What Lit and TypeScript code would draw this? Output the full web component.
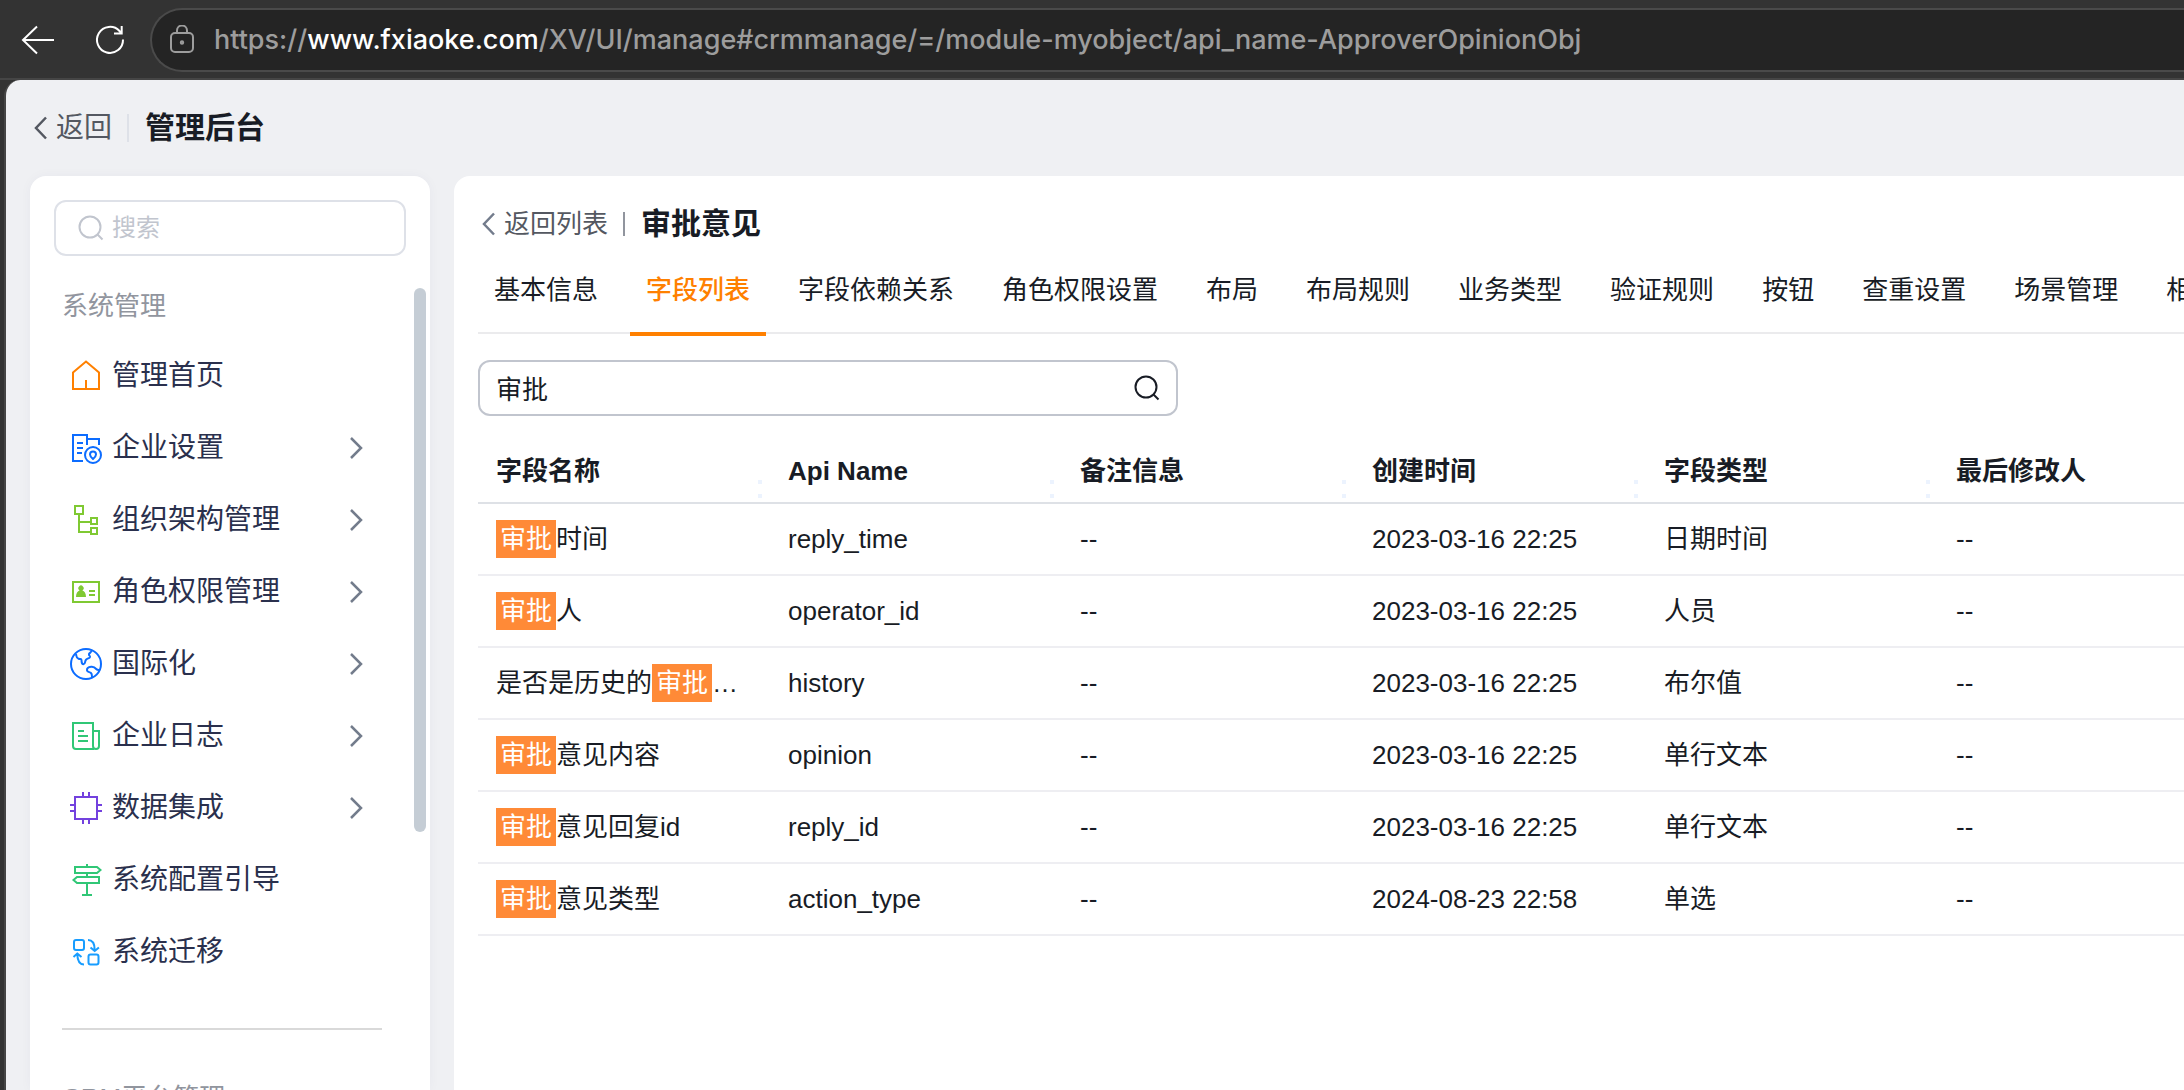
import { LitElement, html, svg, css, nothing } from "lit";
import { customElement, property, state } from "lit/decorators.js";
import { classMap } from "lit/directives/class-map.js";

const icons = {
  home: svg`<path d="M3 29V12.5L16 1.5l13 11V29Z M16 20v9"/>`,
  company: svg`<path d="M13 29H3V3h14v10 M17 7h12v6 M7 11h6M7 16h6M7 21h5"/><circle cx="23" cy="23" r="8"/><path d="M23 27c-2-1.800-3-3-3-4.600a3 3 0 0 1 6 0c0 1.600-1 2.800-3 4.600Z"/>`,
  org: svg`<path d="M5 2h8v8H5Z M9 11v17h11 M9 18h11 M21 14h6v6h-6Z M21 24h6v6h-6Z"/>`,
  role: svg`<path d="M3 6h26v20H3Z M19 15h6 M19 19h6"/><path class="solid" d="M6 21c0-4 1.600-6 3.600-6.600a2.600 2.600 0 1 1 2.800 0C14.400 15 16 17 16 21Z"/>`,
  globe: svg`<circle cx="16" cy="16" r="15"/><path d="M6 6c.5 2 0 4 2.500 4.800 2 .6 2.800-.5 3 1.200.2 2-.2 4.200 2 4.200 2.200 0 1-3 2.500-4.500 1.500-1.500 3.500-1.200 4-2.700.4-1.400-1.600-1.400-1-3 .5-1.200 2.400-1.400 2.600-3.500 M30 22c-1.600.2-2.800.2-3.800-1-1.200-1.500-2.700-2.500-5-2.200-2.600.3-4.400 1.700-4.200 3.500.2 1.900 2.400 1.600 3.800 2.600 1.400 1 1.200 2.400 1.200 4.800"/>`,
  log: svg`<path d="M24 29H6a3 3 0 0 1-3-3V3h20v23a3 3 0 0 0 3 3 3 3 0 0 0 3-3V11h-6 M8 11h6 M8 16h10 M8 21h10"/>`,
  chip: svg`<path d="M5 5h22v22H5Z M13 0v5 M19 0v5 M13 27v5 M19 27v5 M0 13h5 M0 19h5 M27 13h5 M27 19h5"/>`,
  guide: svg`<path d="M5 3h22l3.500 3L27 9H5Z M29 13H7l-3.500 3L7 19h22Z M17 0v3 M17 9v4 M17 19v12 M12 31h10"/>`,
  migrate: svg`<rect x="4" y="4" width="10" height="10" rx="2"/><rect x="18.500" y="18.500" width="10" height="10" rx="2"/><path d="M18 4c4.500 0 6.700 3 6.700 10 M20.500 11.500l4.200 3.500 4.200-3.500 M14 28.500c-4.500 0-6.500-3.500-6.700-10 M3.500 21l3.800-3.500 4.200 3.500"/>`,
};

type IconName = keyof typeof icons;

interface MenuItem {
  label: string;
  icon: IconName;
  color: string;
  expandable: boolean;
}

const MENU: MenuItem[] = [
  { label: "管理首页", icon: "home", color: "orange", expandable: false },
  { label: "企业设置", icon: "company", color: "blue", expandable: true },
  { label: "组织架构管理", icon: "org", color: "lime", expandable: true },
  { label: "角色权限管理", icon: "role", color: "lime", expandable: true },
  { label: "国际化", icon: "globe", color: "blue", expandable: true },
  { label: "企业日志", icon: "log", color: "green", expandable: true },
  { label: "数据集成", icon: "chip", color: "purple", expandable: true },
  { label: "系统配置引导", icon: "guide", color: "green", expandable: false },
  { label: "系统迁移", icon: "migrate", color: "sky", expandable: false },
];

const TABS = ["基本信息", "字段列表", "字段依赖关系", "角色权限设置", "布局", "布局规则", "业务类型", "验证规则", "按钮", "查重设置", "场景管理", "相"];

const COLUMNS = ["字段名称", "Api Name", "备注信息", "创建时间", "字段类型", "最后修改人"];

const ROWS = [
  ["审批时间", "reply_time", "--", "2023-03-16 22:25", "日期时间", "--"],
  ["审批人", "operator_id", "--", "2023-03-16 22:25", "人员", "--"],
  ["是否是历史的审批…", "history", "--", "2023-03-16 22:25", "布尔值", "--"],
  ["审批意见内容", "opinion", "--", "2023-03-16 22:25", "单行文本", "--"],
  ["审批意见回复id", "reply_id", "--", "2023-03-16 22:25", "单行文本", "--"],
  ["审批意见类型", "action_type", "--", "2024-08-23 22:58", "单选", "--"],
];

const chevronLeft = html`<svg class="chevron" viewBox="0 0 14 24" aria-hidden="true"><path d="M12 1.500L2 12l10 10.500"/></svg>`;
const magnifier = html`<svg class="magnifier" viewBox="0 0 26 26" aria-hidden="true"><circle cx="12" cy="12" r="10.500"/><path d="M19.500 19.500L24.500 24.500"/></svg>`;

const shared = css`
  * { box-sizing: border-box; }
  button, input { font: inherit; color: inherit; margin: 0; padding: 0; border: 0; background: none; }
  button { cursor: pointer; white-space: nowrap; }
  a { color: inherit; text-decoration: none; }
  h1, h2 { margin: 0; }
  svg { fill: none; stroke: currentColor; stroke-width: 2; flex: none; display: block; }
  .chevron { width: 14px; height: 24px; stroke-width: 2.500; }
  .magnifier { width: 26px; height: 26px; }
`;

@customElement("browser-bar")
export class BrowserBar extends LitElement {
  static styles = [shared, css`
    :host { display: flex; align-items: center; height: 80px; padding: 2px 0 0 20px; background: #333; color: #fff; border-bottom: 2px solid #454545; overflow: hidden; box-sizing: border-box; }
    .navs { display: flex; gap: 36px; }
    .nav svg { width: 36px; height: 32px; }
    .address { flex: 1; height: 64px; margin-left: 22px; padding-left: 16px; display: flex; align-items: center; gap: 18px; border: 2px solid #4a4a4a; border-right: 0; border-radius: 32px 0 0 32px; background: #242424; color: #9d9d9d; font: 500 27px/36px Inter, sans-serif; white-space: nowrap; min-width: 0; }
    .address svg { width: 28px; height: 30px; }
    .domain { color: #fff; }
  `];

  render() {
    return html`
      <div class="navs">
        <button class="nav" aria-label="后退"><svg viewBox="0 0 36 32"><path d="M34 16H3 M17 2.500L3 16l14 13.500"/></svg></button>
        <button class="nav" aria-label="刷新"><svg viewBox="0 0 36 32"><path d="M31 15.500A13 13 0 1 1 27.500 7L29.500 9 M29.700 2v7.500H22"/></svg></button>
      </div>
      <div class="address">
        <svg viewBox="0 0 28 30"><rect x="3" y="8" width="22" height="19" rx="4"/><path d="M9 8V5.500a5 5 0 0 1 10 0V8"/><circle cx="14" cy="17.500" r="1.200"/></svg>
        <span>https://<span class="domain">www.fxiaoke.com</span>/XV/UI/manage#crmmanage/=/module-myobject/api_name-ApproverOpinionObj</span>
      </div>
    `;
  }
}

@customElement("side-menu")
export class SideMenu extends LitElement {
  static styles = [shared, css`
    :host { display: block; position: relative; width: 400px; flex: none; padding: 24px 24px 0; background: #fff; border-radius: 16px 16px 0 0; box-shadow: 0 0 12px rgba(40, 60, 110, 0.04); overflow: hidden; box-sizing: border-box; }
    .search { display: flex; align-items: center; gap: 8px; height: 56px; padding: 0 22px; border: 2px solid #dee1e8; border-radius: 12px; color: #c1c5ce; font-size: 24px; }
    .search input { flex: 1; min-width: 0; outline: none; color: #181c25; }
    .search input::placeholder { color: #c1c5ce; opacity: 1; }
    .group { margin: 0; padding: 32px 8px 16px; font-size: 26px; line-height: 36px; font-weight: 400; color: #91959e; }
    nav { padding: 0 24px 0 16px; }
    .item { display: flex; align-items: center; gap: 10px; height: 72px; width: 100%; color: #2a304d; font-size: 28px; line-height: 40px; }
    .item span { flex: 1; }
    .icon { width: 32px; height: 32px; }
    .solid { fill: currentColor; stroke: none; }
    .arrow { width: 14px; height: 24px; margin-right: 19px; stroke-width: 2.500; color: #737c8c; }
    .orange { color: #ff8000; }
    .blue { color: #0c6cff; }
    .lime { color: #7fc932; }
    .green { color: #30c776; }
    .purple { color: #7341de; }
    .sky { color: #189dff; }
    .divider { height: 2px; margin: 40px 24px 18px 8px; border: 0; background: #d9d9d9; }
    .thumb { position: absolute; top: 112px; right: 4px; width: 12px; height: 544px; border-radius: 6px; background: #c5cdd5; }
  `];

  render() {
    return html`
      <label class="search">${magnifier}<input type="text" placeholder="搜索" aria-label="搜索" /></label>
      <h2 class="group">系统管理</h2>
      <nav>
        ${MENU.map((m) => html`
          <a class="item" href="#">
            <svg class="icon ${m.color}" viewBox="0 0 32 32" aria-hidden="true">${icons[m.icon]}</svg>
            <span>${m.label}</span>
            ${m.expandable ? html`<svg class="arrow" viewBox="0 0 14 24" aria-hidden="true"><path d="M2 2l10 10L2 22"/></svg>` : nothing}
          </a>`)}
      </nav>
      <hr class="divider" />
      <h2 class="group">CRM平台管理</h2>
      <div class="thumb"></div>
    `;
  }
}

@customElement("field-table")
export class FieldTable extends LitElement {
  @property() keyword = "";

  static styles = [shared, css`
    :host { display: block; overflow: hidden; }
    table { table-layout: fixed; border-collapse: separate; border-spacing: 0; width: max(100%, 1752px); color: #181c25; font-size: 26px; line-height: 38px; }
    th, td { width: 292px; padding: 0 18px; text-align: left; white-space: nowrap; overflow: hidden; }
    th { position: relative; height: 64px; border-bottom: 2px solid #dee1e6; font-weight: 700; }
    td { height: 72px; border-bottom: 2px solid #eeeef2; }
    .grip { position: absolute; right: 8px; bottom: 4px; width: 4px; height: 18px; border: solid #ecf3fe; border-width: 4px 0; }
    .hit { display: inline-block; padding: 0 4px; background: #ff8a37; color: #fff; }
  `];

  private mark(text: string) {
    const at = this.keyword ? text.indexOf(this.keyword) : -1;
    if (at < 0) return text;
    return html`${text.slice(0, at)}<mark class="hit">${this.keyword}</mark>${text.slice(at + this.keyword.length)}`;
  }

  render() {
    return html`
      <table>
        <thead><tr>${COLUMNS.map((c) => html`<th scope="col">${c}<span class="grip"></span></th>`)}</tr></thead>
        <tbody>${ROWS.map((row) => html`<tr>${row.map((v, i) => html`<td>${i === 0 ? this.mark(v) : v}</td>`)}</tr>`)}</tbody>
      </table>
    `;
  }
}

@customElement("app-root")
export class AppRoot extends LitElement {
  @state() private tab = 1;
  @state() private keyword = "审批";

  static styles = [shared, css`
    :host { display: flex; flex-direction: column; height: 100vh; overflow: hidden; background: #333; font-family: "Liberation Sans", "Noto Sans CJK SC", sans-serif; color: #181c25; }
    .page { flex: 1; min-height: 0; display: flex; flex-direction: column; margin-left: 4px; border-left: 2px solid #454545; border-radius: 16px 0 0 0; background: #eff0f3; overflow: hidden; }
    .top { display: flex; align-items: center; height: 96px; padding-left: 28px; }
    .back { display: flex; align-items: center; gap: 8px; color: #545861; font-size: 28px; line-height: 40px; }
    .rule { width: 2px; height: 28px; margin: 0 16px 0 15px; background: #dee1e8; }
    .top h1, .head h2 { font-size: 30px; line-height: 44px; font-weight: 700; }
    .body { flex: 1; min-height: 0; display: flex; gap: 24px; padding-left: 24px; }
    main { flex: 1; min-width: 0; padding: 24px 0 0 24px; background: #fff; border-radius: 16px 0 0 0; overflow: hidden; }
    .head { display: flex; align-items: center; height: 48px; padding-left: 4px; }
    .head .back { font-size: 26px; }
    .head .chevron { color: #737c8c; }
    .head .rule { height: 24px; background: #91959e; }
    .tabs { display: flex; gap: 16px; height: 86px; border-bottom: 2px solid #ebebed; }
    .tab { flex: none; height: 88px; padding: 0 16px; border-bottom: 4px solid transparent; font-size: 26px; line-height: 36px; }
    .tab.active { color: #ff8000; border-bottom-color: #ff8000; font-weight: 500; }
    .filter { display: flex; align-items: center; width: 700px; max-width: 100%; height: 56px; margin: 26px 0 24px; padding: 0 16px; border: 2px solid #c1c5ce; border-radius: 12px; font-size: 26px; }
    .filter input { flex: 1; min-width: 0; height: 36px; padding-bottom: 2px; outline: none; }
  `];

  render() {
    return html`
      <browser-bar></browser-bar>
      <div class="page">
        <header class="top">
          <a class="back" href="#">${chevronLeft}返回</a>
          <span class="rule"></span>
          <h1>管理后台</h1>
        </header>
        <div class="body">
          <side-menu></side-menu>
          <main>
            <div class="head">
              <a class="back" href="#">${chevronLeft}返回列表</a>
              <span class="rule"></span>
              <h2>审批意见</h2>
            </div>
            <div class="tabs" role="tablist">
              ${TABS.map((t, i) => html`
                <button role="tab" aria-selected=${i === this.tab} class=${classMap({ tab: true, active: i === this.tab })} @click=${() => (this.tab = i)}>${t}</button>`)}
            </div>
            <div class="filter">
              <input type="text" aria-label="字段名称" .value=${this.keyword} @input=${(e: Event) => (this.keyword = (e.target as HTMLInputElement).value)} />
              <button aria-label="搜索">${magnifier}</button>
            </div>
            <field-table .keyword=${this.keyword}></field-table>
          </main>
        </div>
      </div>
    `;
  }
}
